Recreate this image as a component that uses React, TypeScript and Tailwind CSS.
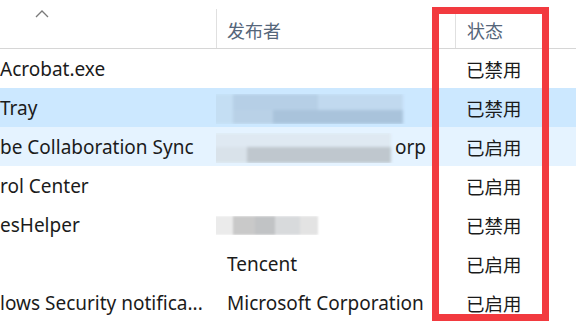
import React from 'react';

type Row = {
  name: string;
  publisher?: string;
  status: string;
  bg: string;
  blur?: 'blue' | 'corp' | 'gray';
};

const rows: Row[] = [
  { name: 'Acrobat.exe', status: '已禁用', bg: 'bg-white' },
  { name: 'Tray', status: '已禁用', bg: 'bg-[#cce8ff]', blur: 'blue' },
  { name: 'be Collaboration Sync', status: '已启用', bg: 'bg-[#e5f3ff]', blur: 'corp' },
  { name: 'rol Center', status: '已启用', bg: 'bg-white' },
  { name: 'esHelper', status: '已禁用', bg: 'bg-white', blur: 'gray' },
  { name: '', publisher: 'Tencent', status: '已启用', bg: 'bg-white' },
  { name: 'lows Security notifica...', publisher: 'Microsoft Corporation', status: '已启用', bg: 'bg-white' },
];

const BlueBlur = () => (
  <div className="flex flex-col h-[30px] w-[190px] ml-[-14px] blur-[1.5px]">
    <div className="flex h-[16px]">
      <div className="w-[20px] bg-[#c4def3]" />
      <div className="w-[85px] bg-[#b6cfe6]" />
      <div className="w-[85px] bg-[#c1d9ef]" />
    </div>
    <div className="flex h-[14px]">
      <div className="w-[20px] bg-[#c4def3]" />
      <div className="w-[40px] bg-[#b9d1e7]" />
      <div className="w-[130px] bg-[#a9c3db]" />
    </div>
  </div>
);

const CorpBlur = () => (
  <div className="flex items-center">
    <div className="flex flex-col h-[30px] w-[178px] ml-[-14px] blur-[1.5px]">
      <div className="h-[14px] bg-[#dfe9f2]" />
      <div className="flex h-[16px]">
        <div className="w-[34px] bg-[#d9e2ea]" />
        <div className="w-[144px] bg-[#bfc7ce]" />
      </div>
    </div>
    <span className="ml-[4px]">orp</span>
    <span className="ml-[8px]">.</span>
  </div>
);

const GrayBlur = () => (
  <div className="flex h-[19px] ml-[-14px] blur-[1px]">
    <div className="w-[20px] bg-[#ebebeb]" />
    <div className="w-[22px] bg-[#c9c9c9]" />
    <div className="w-[20px] bg-[#c1c3c5]" />
    <div className="w-[25px] bg-[#d8dadc]" />
    <div className="w-[18px] bg-[#e3e3e3]" />
  </div>
);

export default function App() {
  return (
    <div className="relative w-[576px] h-[325px] overflow-hidden bg-white text-[19px] text-[#1b1b1b] font-['Noto_Sans','Noto_Sans_CJK_SC',sans-serif]">
      <div className="flex h-[49px] border-b border-[#d6d6d6]">
        <div className="w-[216px] relative">
          <svg className="absolute left-[35px] top-[9px]" width="14" height="9" viewBox="0 0 14 9">
            <path d="M1 8 L7 2 L13 8" fill="none" stroke="#7a7a7a" strokeWidth="1.3" />
          </svg>
        </div>
        <div className="w-[239px] flex items-end pb-[3px] pl-[10px] border-l border-[#e0e0e0] mt-[9px] text-[18px] text-[#55667a]">
          发布者
        </div>
        <div className="flex-1 flex items-end pb-[3px] pl-[11px] border-l border-[#e0e0e0] mt-[12px] text-[18px] text-[#55667a]">
          状态
        </div>
      </div>

      {rows.map((r, i) => (
        <div key={i} className={`flex h-[39px] items-center pt-[2px] ${r.bg}`}>
          <div className="w-[216px] whitespace-nowrap overflow-hidden">{r.name}</div>
          <div className="w-[239px] pl-[11px] whitespace-nowrap overflow-hidden">
            {r.blur === 'blue' && <BlueBlur />}
            {r.blur === 'corp' && <CorpBlur />}
            {r.blur === 'gray' && <GrayBlur />}
            {r.publisher}
          </div>
          <div className="flex-1 pl-[11px] whitespace-nowrap text-[18.5px]">{r.status}</div>
        </div>
      ))}

      <div className="absolute left-[432px] top-[7px] w-[117px] h-[314px] border-[7px] border-[#f23a3f]" />
    </div>
  );
}
